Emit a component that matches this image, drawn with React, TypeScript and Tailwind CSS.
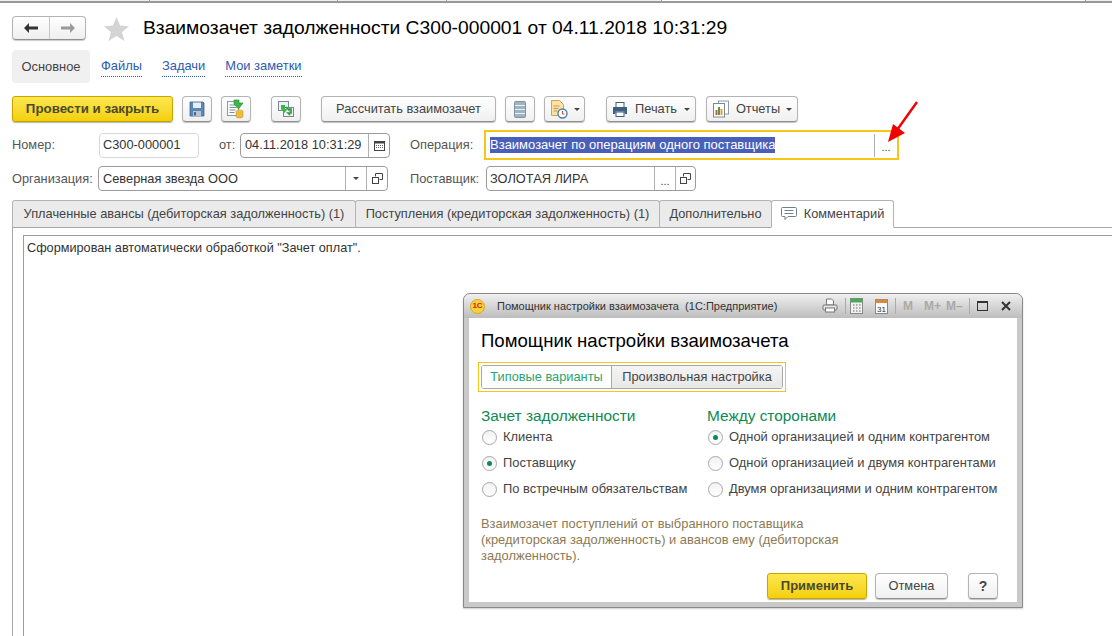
import type { ReactNode } from 'react';

const btn =
  'flex items-center justify-center h-[26px] rounded-[4px] border border-[#b4b4b4] border-b-[#8f8f8f] bg-gradient-to-b from-white to-[#f0f0f0] shadow-[0_1px_1px_rgba(0,0,0,0.25)] text-[12.8px] text-[#444]';
const field = 'flex items-center h-[25px] rounded-[4px] border border-[#9c9c9c] bg-white text-[12.8px] text-[#333]';

function Caret() {
  return <span className="inline-block w-0 h-0 border-x-[3px] border-x-transparent border-t-[3px] border-t-[#444]" />;
}

function OpenIcon() {
  return (
    <svg width="11" height="11" viewBox="0 0 11 11" fill="none" stroke="#444">
      <path d="M3.5 3.5V.5h7v6h-3" />
      <rect x="0.5" y="4.5" width="6" height="6" />
    </svg>
  );
}

function Cell({ w, children }: { w: string; children: ReactNode }) {
  return <div className={`${w} h-full flex items-center justify-center border-l border-[#b0b0b0] shrink-0`}>{children}</div>;
}

function Dots() {
  return <span className="text-[11px] leading-none text-[#444] pt-[5px]">...</span>;
}

function SaveIcon() {
  return (
    <svg width="16" height="16" viewBox="0 0 16 16">
      <path d="M1 1h13l1 1v13H1z" fill="#5b86b5" stroke="#3f668f" strokeWidth="0.8" />
      <rect x="4" y="1.5" width="8" height="5.5" fill="#e6eef6" />
      <rect x="4" y="10" width="8" height="5" fill="#b8c6d4" />
      <rect x="5" y="11" width="2" height="3.5" fill="#49688a" />
    </svg>
  );
}

function PostIcon() {
  return (
    <svg width="20" height="20" viewBox="0 0 20 20">
      <rect x="1.5" y="2.5" width="11" height="14" fill="#fff" stroke="#8a9aa8" />
      <path d="M3.5 6h7M3.5 8.5h7M3.5 11h6M3.5 13.5h5" stroke="#7b8b99" />
      <path d="M8 1h5v3h4l-4.5 6L8 5z" fill="#3cb54a" stroke="#1f8a30" strokeWidth="0.6" />
      <ellipse cx="13.5" cy="12.5" rx="3.5" ry="1.5" fill="#f2c64a" stroke="#b98d1d" strokeWidth="0.5" />
      <path d="M10 12.5v5c0 .8 1.6 1.5 3.5 1.5s3.5-.7 3.5-1.5v-5" fill="#f0bb3c" stroke="#b98d1d" strokeWidth="0.5" />
    </svg>
  );
}

function ChainIcon() {
  return (
    <svg width="18" height="18" viewBox="0 0 18 18">
      <rect x="1.5" y="1.5" width="10" height="9" fill="#eef1f3" stroke="#7b8791" />
      <rect x="6.5" y="7.5" width="10" height="9" fill="#eef1f3" stroke="#7b8791" />
      <path d="M4 5h4v4h2.5L7.5 13 4 9z" fill="#3cb54a" />
      <path d="M9 7l3 3v-1h2v4h-3l2 2" fill="none" stroke="#2a9a3a" strokeWidth="1.6" />
    </svg>
  );
}

function ListIcon() {
  return (
    <svg width="12" height="17" viewBox="0 0 12 17">
      <rect x="0.5" y="0.5" width="11" height="16" rx="1" fill="#9fb3c2" stroke="#7b92a4" />
      <path d="M1 4.5h10M1 8.5h10M1 12.5h10" stroke="#eef3f6" />
    </svg>
  );
}

function DocClockIcon() {
  return (
    <svg width="18" height="19" viewBox="0 0 18 19">
      <path d="M1.5.5h8l4 4v11h-12z" fill="#fbe2a8" stroke="#d6a24a" />
      <path d="M3.5 6h6M3.5 8.5h5M3.5 11h4" stroke="#c99a44" />
      <circle cx="12.5" cy="13.5" r="4.5" fill="#fff" stroke="#4f7fa8" strokeWidth="1.4" />
      <path d="M12.5 11v3h2" stroke="#d04a3a" fill="none" />
    </svg>
  );
}

function PrintIcon() {
  return (
    <svg width="16" height="15" viewBox="0 0 16 15">
      <rect x="4" y="0.5" width="8" height="5" fill="#fff" stroke="#3f5f80" />
      <path d="M1 5h14v7h-2.5V9.5h-9V12H1z" fill="#3f5f80" />
      <rect x="4" y="10" width="8" height="4.5" fill="#fff" stroke="#3f5f80" />
    </svg>
  );
}

function ReportIcon() {
  return (
    <svg width="18" height="18" viewBox="0 0 18 18">
      <rect x="6.5" y="1" width="10" height="13" fill="#fff" stroke="#8f9ba5" />
      <rect x="1.5" y="3.5" width="11" height="13.5" fill="#fff" stroke="#7c8893" />
      <rect x="3.5" y="10" width="2" height="5" fill="#d0533f" />
      <rect x="6" y="7" width="2" height="8" fill="#4d9c4a" />
      <rect x="8.5" y="9" width="2" height="6" fill="#d9a53a" />
    </svg>
  );
}

function Tab({ w, active, children }: { w: string; active?: boolean; children: ReactNode }) {
  return (
    <div
      className={`${w} h-[28px] flex items-center justify-center whitespace-nowrap border border-[#b4b4b4] rounded-t-[3px] -mr-px text-[12.8px] text-[#444] ${
        active ? 'bg-white border-b-white relative z-10' : 'bg-[#ebebeb] border-b-[#a8a8a8]'
      }`}
    >
      {children}
    </div>
  );
}

function Radio({ label, checked }: { label: string; checked?: boolean }) {
  return (
    <div className="h-[26px] ml-px flex items-center gap-[6px] text-[12.9px] text-[#444] whitespace-nowrap">
      <span className="w-[15px] h-[15px] rounded-full border border-[#a8a8a8] bg-gradient-to-b from-[#f2f2f2] to-white flex items-center justify-center shrink-0">
        {checked && <span className="w-[5px] h-[5px] rounded-full bg-[#0d8a55]" />}
      </span>
      {label}
    </div>
  );
}

function Dialog() {
  return (
    <div className="absolute left-[463px] top-[293px] w-[560px] h-[315px] border border-[#8a8a8a] rounded-t-[7px] bg-[#c9c9c9] px-[5px] pb-[5px] flex flex-col shadow-[0_1px_2px_rgba(0,0,0,0.2)]">
      <div className="h-[24px] -mx-[5px] px-[6px] rounded-t-[6px] bg-gradient-to-b from-[#f0f0f0] to-[#bdbdbd] flex items-center shrink-0">
        <span className="w-[15px] h-[15px] rounded-full bg-[#f7d23a] border border-[#d9a520] flex items-center justify-center text-[8px] font-bold text-[#d02020] leading-none">
          1С
        </span>
        <span className="ml-[12px] text-[11px] text-[#333] whitespace-pre">Помощник настройки взаимозачета  (1С:Предприятие)</span>
        <div className="ml-auto flex items-center">
          <svg width="16" height="16" viewBox="0 0 16 16" className="mr-[7px]">
            <path d="M4.5 1h5l2 2v4h-7z" fill="#fff" stroke="#777" />
            <rect x="1" y="7" width="14" height="5" rx="1" fill="#e4e4e4" stroke="#777" />
            <rect x="3.5" y="10" width="9" height="4" fill="#fff" stroke="#777" />
          </svg>
          <div className="h-[16px] border-l border-[#aaa] mr-[4px]" />
          <svg width="13" height="16" viewBox="0 0 13 16" className="mr-[12px]">
            <rect x="0.5" y="0.5" width="12" height="15" fill="#f2f2f2" stroke="#888" />
            <rect x="0.5" y="0.5" width="12" height="4" fill="#4fa85a" />
            <path d="M3 7h1.5M6 7h1.5M9 7h1.5M3 10h1.5M6 10h1.5M9 10h1.5M3 13h1.5M6 13h1.5M9 13h1.5" stroke="#666" />
          </svg>
          <svg width="13" height="16" viewBox="0 0 13 16" className="mr-[7px]">
            <rect x="0.5" y="1.5" width="12" height="14" fill="#fafafa" stroke="#888" />
            <rect x="0.5" y="1.5" width="12" height="3.5" fill="#d9893c" />
            <text x="6.5" y="13.5" textAnchor="middle" fontSize="8" fontFamily="Liberation Sans" fill="#333">
              31
            </text>
          </svg>
          <div className="h-[16px] border-l border-[#aaa] mr-[7px]" />
          <span className="w-[11px] text-[12px] font-bold text-[#a9a9a9] mr-[10px] whitespace-nowrap">M</span>
          <span className="w-[15px] text-[12px] font-bold text-[#a9a9a9] mr-[7px] whitespace-nowrap">M+</span>
          <span className="w-[16px] text-[12px] font-bold text-[#a9a9a9] mr-[7px] whitespace-nowrap">M–</span>
          <div className="h-[16px] border-l border-[#aaa] mr-[7px]" />
          <span className="w-[11px] h-[10px] border border-[#333] border-t-2 mr-[13px]" />
          <svg width="10" height="10" viewBox="0 0 10 10" className="mr-[5px]">
            <path d="M1 1l8 8M9 1L1 9" stroke="#333" strokeWidth="2" />
          </svg>
        </div>
      </div>
      <div className="flex-1 bg-white pl-[12px] pr-[19px] flex flex-col">
        <div className="text-[18.6px] leading-[21px] text-black mt-[12px] whitespace-nowrap">Помощник настройки взаимозачета</div>
        <div className="mt-[11px] -ml-[3px] w-[308px] h-[30px] border border-[#f5c518] flex items-center px-[2px]">
          <div className="w-full h-[24px] rounded-[3px] border border-[#a8a8a8] flex overflow-hidden text-[12.8px]">
            <div className="w-[129px] flex items-center justify-center bg-white text-[#2ba36f]">Типовые варианты</div>
            <div className="flex-1 flex items-center justify-center border-l border-[#a8a8a8] bg-gradient-to-b from-[#f4f4f4] to-[#e8e8e8] text-[#444]">
              Произвольная настройка
            </div>
          </div>
        </div>
        <div className="mt-[15px] flex">
          <div className="w-[226px]">
            <div className="text-[15.4px] leading-[18px] text-[#0d8a55] -mb-px">Зачет задолженности</div>
            <Radio label="Клиента" />
            <Radio label="Поставщику" checked />
            <Radio label="По встречным обязательствам" />
          </div>
          <div>
            <div className="text-[15.4px] leading-[18px] text-[#0d8a55] -mb-px">Между сторонами</div>
            <Radio label="Одной организацией и одним контрагентом" checked />
            <Radio label="Одной организацией и двумя контрагентами" />
            <Radio label="Двумя организациями и одним контрагентом" />
          </div>
        </div>
        <div className="mt-[14px] w-[370px] text-[12.9px] leading-[16px] text-[#8c7a55]">
          Взаимозачет поступлений от выбранного поставщика (кредиторская задолженность) и авансов ему (дебиторская задолженность).
        </div>
        <div className="mt-auto mb-[3px] flex justify-end">
          <div className="w-[100px] h-[26px] flex items-center justify-center rounded-[3px] border border-[#c9a400] bg-gradient-to-b from-[#fde74c] to-[#f3d000] text-[13px] font-bold text-[#4a4a2a] shadow-[0_1px_1px_rgba(0,0,0,0.3)]">
            Применить
          </div>
          <div className={`${btn} w-[73px] ml-[8px]`}>Отмена</div>
          <div className={`${btn} w-[30px] ml-[20px] text-[14px] font-bold`}>?</div>
        </div>
      </div>
    </div>
  );
}

export default function App() {
  return (
    <div className="relative w-[1112px] h-[636px] overflow-hidden bg-white font-['Liberation_Sans',Arial,sans-serif] flex flex-col">
      {/* strip of the window above */}
      <div className="h-[3px] shrink-0 flex bg-[#f0f0f0] border-b-2 border-[#999]">
        <div className="w-[150px] border-r border-[#999]" />
        <div className="w-[188px] border-r border-[#999]" />
        <div className="w-[109px] border-r border-[#999]" />
        <div className="w-[215px] border-r border-[#999]" />
        <div className="w-[424px] border-r border-[#999] bg-white" />
      </div>

      <div className="pl-3 mt-[12px] flex items-center h-[26px] shrink-0">
        <div className="w-[74px] h-[24px] flex rounded-[4px] border border-[#b4b4b4] border-b-[#8f8f8f] bg-gradient-to-b from-white to-[#efefef] shadow-[0_1px_1px_rgba(0,0,0,0.2)]">
          <div className="w-[37px] flex items-center justify-center border-r border-[#c8c8c8]">
            <svg width="14" height="10" viewBox="0 0 14 10">
              <path d="M0 5l5-5v3.5h9v3H5V10z" fill="#333" />
            </svg>
          </div>
          <div className="flex-1 flex items-center justify-center">
            <svg width="14" height="10" viewBox="0 0 14 10">
              <path d="M14 5L9 0v3.5H0v3h9V10z" fill="#9a9a9a" />
            </svg>
          </div>
        </div>
        <svg width="25" height="24" viewBox="0 0 25 24" className="ml-[18px] mt-[2px]">
          <path d="M12.5 0l3.6 8.6 8.9.6-6.9 5.8 2.3 9-7.9-5-7.9 5 2.3-9L0 9.2l8.9-.6z" fill="#d4d4d4" />
        </svg>
        <h1 className="ml-[14px] text-[19.25px] font-normal text-black whitespace-nowrap">
          Взаимозачет задолженности С300-000001 от 04.11.2018 10:31:29
        </h1>
      </div>

      <div className="pl-3 mt-[9px] flex items-center h-[33px] shrink-0 text-[12.9px]">
        <div className="w-[78px] h-full rounded-[4px] bg-[#f0f0f0] flex items-center justify-center text-[#444]">Основное</div>
        <a className="ml-[11px] text-[#2a5cae] border-b border-dotted border-[#2a5cae]">Файлы</a>
        <a className="ml-[20px] text-[#2a5cae] border-b border-dotted border-[#2a5cae]">Задачи</a>
        <a className="ml-[20px] text-[#2a5cae] border-b border-dotted border-[#2a5cae]">Мои заметки</a>
      </div>

      <div className="pl-3 mt-[13px] flex items-center h-[26px] shrink-0">
        <div className="w-[161px] h-[26px] flex items-center justify-center rounded-[3px] border border-[#c9a400] bg-gradient-to-b from-[#fde74c] to-[#f3d000] text-[13.3px] font-bold text-[#4a4a2a] shadow-[0_1px_1px_rgba(0,0,0,0.3)]">
          Провести и закрыть
        </div>
        <div className={`${btn} w-[30px] ml-[9px]`}>
          <SaveIcon />
        </div>
        <div className={`${btn} w-[30px] ml-[9px]`}>
          <PostIcon />
        </div>
        <div className={`${btn} w-[30px] ml-[20px]`}>
          <ChainIcon />
        </div>
        <div className={`${btn} w-[175px] ml-[20px]`}>Рассчитать взаимозачет</div>
        <div className={`${btn} w-[30px] ml-[9px]`}>
          <ListIcon />
        </div>
        <div className={`${btn} w-[41px] ml-[9px] gap-[6px]`}>
          <DocClockIcon />
          <Caret />
        </div>
        <div className={`${btn} w-[90px] ml-[21px] gap-[7px]`}>
          <PrintIcon />
          Печать
          <Caret />
        </div>
        <div className={`${btn} w-[92px] ml-[10px] gap-[6px]`}>
          <ReportIcon />
          Отчеты
          <Caret />
        </div>
      </div>

      <div className="pl-3 mt-[8px] flex items-center h-[30px] shrink-0 text-[12.8px] text-[#555]">
        <span className="w-[87px]">Номер:</span>
        <div className="w-[100px] h-[25px] flex items-center px-[3px] rounded-[4px] border border-[#d8d8d8] text-[#333]">С300-000001</div>
        <span className="ml-[20px] w-[21px]">от:</span>
        <div className={`${field} w-[150px]`}>
          <span className="flex-1 pl-[4px] whitespace-nowrap">04.11.2018 10:31:29</span>
          <Cell w="w-[21px]">
            <svg width="11" height="11" viewBox="0 0 11 11">
              <rect x="0.5" y="1.5" width="10" height="9" fill="#fff" stroke="#444" />
              <rect x="0.5" y="1" width="10" height="2.5" fill="#444" />
              <path d="M2 5.5h7M2 7.5h7" stroke="#666" strokeDasharray="1 1" />
            </svg>
          </Cell>
        </div>
        <span className="ml-[20px] w-[74px]">Операция:</span>
        <div className="w-[415px] h-[30px] border-2 border-[#f5c518] flex items-center pl-[4px]">
          <span className="bg-[#4a5fb8] text-white text-[13px] leading-[16px] whitespace-nowrap">Взаимозачет по операциям одного поставщика</span>
          <div className="ml-auto w-[23px] h-[23px] flex items-center justify-center border-l border-[#b0b0b0]">
            <Dots />
          </div>
        </div>
      </div>

      <div className="pl-3 mt-[6px] flex items-center h-[25px] shrink-0 text-[12.8px] text-[#555]">
        <span className="w-[86px]">Организация:</span>
        <div className={`${field} w-[290px]`}>
          <span className="flex-1 pl-[4px]">Северная звезда ООО</span>
          <Cell w="w-[21px]">
            <Caret />
          </Cell>
          <Cell w="w-[21px]">
            <OpenIcon />
          </Cell>
        </div>
        <span className="ml-[22px] w-[76px] whitespace-nowrap">Поставщик:</span>
        <div className={`${field} w-[210px]`}>
          <span className="flex-1 pl-[3px] whitespace-nowrap">ЗОЛОТАЯ ЛИРА</span>
          <Cell w="w-[21px]">
            <Dots />
          </Cell>
          <Cell w="w-[20px]">
            <OpenIcon />
          </Cell>
        </div>
      </div>

      <div className="pl-3 mt-[9px] flex items-end shrink-0">
        <Tab w="w-[344px]">Уплаченные авансы (дебиторская задолженность) (1)</Tab>
        <Tab w="w-[305px]">Поступления (кредиторская задолженность) (1)</Tab>
        <Tab w="w-[113px]">Дополнительно</Tab>
        <Tab w="w-[123px]" active>
          <svg width="16" height="14" viewBox="0 0 16 14" className="mr-[7px]" fill="none" stroke="#6f7f8c">
            <path d="M1.5.5h13a1 1 0 0 1 1 1v7a1 1 0 0 1-1 1H7l-3 3v-3H1.5a1 1 0 0 1-1-1v-7a1 1 0 0 1 1-1z" />
            <path d="M3.5 3.5h9M3.5 6.5h9" />
          </svg>
          Комментарий
        </Tab>
        <div className="flex-1 border-b border-[#a8a8a8]" />
      </div>

      <div className="ml-3 flex-1 border-l border-[#a8a8a8] pl-[10px] pt-[8px] -mt-px">
        <div className="h-full border-l border-t border-[#9c9c9c] pl-[3px] pt-[3px] text-[12.7px] text-[#333]">
          Сформирован автоматически обработкой "Зачет оплат".
        </div>
      </div>

      <Dialog />

      {/* red pointer arrow drawn over the form */}
      <svg width="36" height="46" viewBox="0 0 36 46" className="absolute left-[884px] top-[100px]">
        <path d="M33 2L13 30" stroke="#f00000" strokeWidth="2.4" />
        <path d="M4 42l5-18 12 9z" fill="#f00000" />
      </svg>
    </div>
  );
}
